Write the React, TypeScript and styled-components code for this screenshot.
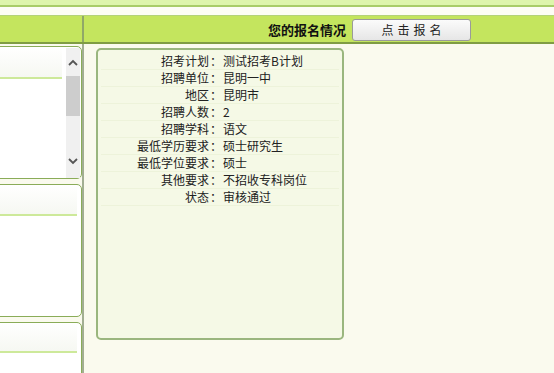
import React from 'react'
import styled, { createGlobalStyle } from 'styled-components'

const GlobalStyle = createGlobalStyle`
  html, body {
    margin: 0;
    padding: 0;
    background: #fafaee;
    overflow: hidden;
  }
  body {
    font-family: 'Noto Sans CJK SC', 'DejaVu Sans', sans-serif;
    font-size: 12px;
    color: #222;
  }
`

const Page = styled.div`
  width: 554px;
  height: 373px;
  display: flex;
  flex-direction: column;
  background: #fafaee;
`
const TopStrip = styled.div`
  height: 5px;
  background: #def5ac;
  border-bottom: 2px solid #a9cd68;
`
const Gap = styled.div`
  height: 8px;
  background: #fdfdf6;
  border-bottom: 1px solid #b4d27a;
`
const HeaderBar = styled.div`
  height: 26px;
  display: flex;
  background: #c4e55e;
  border-bottom: 2px solid #7f9c44;
`
const HeaderLeft = styled.div`
  width: 82px;
  border-right: 2px solid #90a868;
`
const HeaderRight = styled.div`
  flex: 1;
  display: flex;
  align-items: center;
  justify-content: flex-end;
  padding-right: 83px;
  gap: 6px;
`
const HeaderTitle = styled.span`
  font-size: 13px;
  font-weight: 700;
  color: #111;
`
const SignButton = styled.button`
  width: 119px;
  height: 22px;
  margin-top: 1px;
  border: 1px solid #9a9a9a;
  border-radius: 3px;
  background: linear-gradient(#fbfbfb, #e6e6e6);
  font-family: 'Noto Sans CJK SC', sans-serif;
  font-size: 12px;
  letter-spacing: 4px;
  color: #222;
  padding: 0 0 0 4px;
`
const Body = styled.div`
  flex: 1;
  display: flex;
  min-height: 0;
`
const LeftColumn = styled.div`
  width: 82px;
  border-right: 2px solid #a2ae92;
  display: flex;
  flex-direction: column;
  gap: 5px;
  padding-top: 2px;
  overflow: hidden;
`
const SidePanel = styled.div<{ $h: number }>`
  height: ${p => p.$h}px;
  flex-shrink: 0;
  margin-left: -6px;
  background: #fff;
  border: 1px solid #8aac58;
  border-radius: 0 5px 5px 0;
  display: flex;
`
const PanelMain = styled.div`
  flex: 1;
`
const PanelHead = styled.div<{ $h: number }>`
  height: ${p => p.$h}px;
  margin-right: 4px;
  border-bottom: 2px solid #cde99a;
  background: linear-gradient(#ffffff, #f6f8f2);
`
const ScrollBar = styled.div`
  width: 14px;
  margin: 1px 1px 0 0;
  background: #f0f0f0;
  display: flex;
  flex-direction: column;
  align-items: center;
`
const Arrow = styled.div`
  height: 28px;
  display: flex;
  align-items: center;
  justify-content: center;
`
const ArrowDown = styled(Arrow)`
  height: 26px;
  align-items: flex-start;
  padding-top: 6px;
  box-sizing: border-box;
`
const Thumb = styled.div`
  width: 14px;
  height: 40px;
  background: #cdcdcd;
`
const Track = styled.div`
  flex: 1;
`
const Main = styled.div`
  flex: 1;
  padding: 4px 0 0 12px;
`
const InfoBox = styled.div`
  width: 240px;
  height: 285px;
  border: 2px solid #9ab67e;
  border-radius: 5px;
  background: #f5f9e6;
  padding: 3px 2px 0;
  box-sizing: content-box;
`
const Row = styled.div`
  display: grid;
  grid-template-columns: 122px 1fr;
  height: 16px;
  line-height: 16px;
  border-bottom: 1px solid #edf3da;
  margin: 0 1px;
`
const Label = styled.span`
  text-align: right;
  white-space: nowrap;
`
const Colon = styled.span`
  display: inline-block;
  width: 14px;
  text-align: left;
  text-indent: 1px;
`

const rows = [
  ['招考计划', '测试招考B计划'],
  ['招聘单位', '昆明一中'],
  ['地区', '昆明市'],
  ['招聘人数', '2'],
  ['招聘学科', '语文'],
  ['最低学历要求', '硕士研究生'],
  ['最低学位要求', '硕士'],
  ['其他要求', '不招收专科岗位'],
  ['状态', '审核通过']
]

const Chevron = ({ up }: { up?: boolean }) => (
  <svg width='10' height='7' viewBox='0 0 10 7'>
    <path
      d={up ? 'M1 6 L5 2 L9 6' : 'M1 1 L5 5 L9 1'}
      fill='none'
      stroke='#555'
      strokeWidth='1.8'
    />
  </svg>
)

const App = () => {
  return (
    <Page>
      <GlobalStyle />
      <TopStrip />
      <Gap />
      <HeaderBar>
        <HeaderLeft />
        <HeaderRight>
          <HeaderTitle>您的报名情况</HeaderTitle>
          <SignButton>点击报名</SignButton>
        </HeaderRight>
      </HeaderBar>
      <Body>
        <LeftColumn>
          <SidePanel $h={131}>
            <PanelMain>
              <PanelHead $h={30} />
            </PanelMain>
            <ScrollBar>
              <Arrow>
                <Chevron up />
              </Arrow>
              <Thumb />
              <Track />
              <ArrowDown>
                <Chevron />
              </ArrowDown>
            </ScrollBar>
          </SidePanel>
          <SidePanel $h={131}>
            <PanelMain>
              <PanelHead $h={29} />
            </PanelMain>
          </SidePanel>
          <SidePanel $h={60}>
            <PanelMain>
              <PanelHead $h={28} />
            </PanelMain>
          </SidePanel>
        </LeftColumn>
        <Main>
          <InfoBox>
            {rows.map(([k, v]) => (
              <Row key={k}>
                <Label>
                  {k}
                  <Colon>：</Colon>
                </Label>
                <span>{v}</span>
              </Row>
            ))}
          </InfoBox>
        </Main>
      </Body>
    </Page>
  )
}

export default App
